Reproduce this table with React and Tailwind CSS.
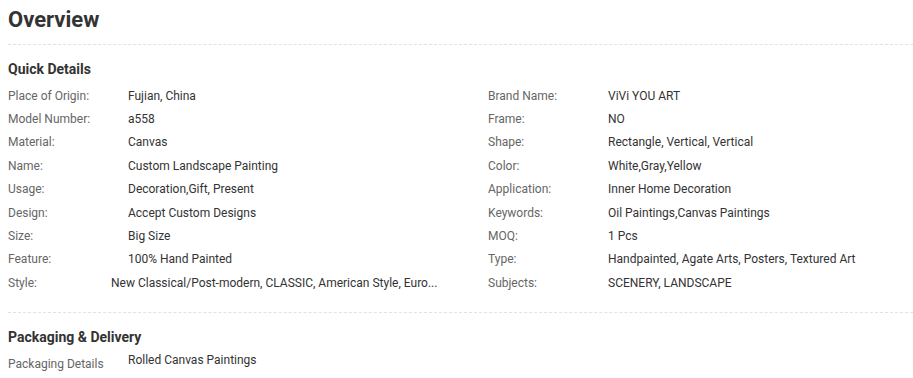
export default function App() {
    const left = [
        ["Place of Origin:", "Fujian, China"],
        ["Model Number:", "a558"],
        ["Material:", "Canvas"],
        ["Name:", "Custom Landscape Painting"],
        ["Usage:", "Decoration,Gift, Present"],
        ["Design:", "Accept Custom Designs"],
        ["Size:", "Big Size"],
        ["Feature:", "100% Hand Painted"],
        ["Style:", "New Classical/Post-modern, CLASSIC, American Style, Euro...", true],
    ];
    const right = [
        ["Brand Name:", "ViVi YOU ART"],
        ["Frame:", "NO"],
        ["Shape:", "Rectangle, Vertical, Vertical"],
        ["Color:", "White,Gray,Yellow"],
        ["Application:", "Inner Home Decoration"],
        ["Keywords:", "Oil Paintings,Canvas Paintings"],
        ["MOQ:", "1 Pcs"],
        ["Type:", "Handpainted, Agate Arts, Posters, Textured Art"],
        ["Subjects:", "SCENERY, LANDSCAPE"],
    ];

    const Row = ({ label, value, wide }) => (
        <div className="flex items-center h-[23.4px] text-[12px]">
            <span className="w-[120px] shrink-0 text-[#666]">{label}</span>
            <span className={`text-[#333] whitespace-nowrap ${wide ? "-ml-[17px]" : ""}`}>{value}</span>
        </div>
    );

    return (
        <div className="min-h-screen bg-white pl-2 overflow-hidden" style={{ fontFamily: "Roboto, 'Liberation Sans', sans-serif" }}>
            {/* Title */}
            <h1 className="text-[22px] font-bold text-[#333] leading-[28px] pt-[6px] pb-[10px] border-b border-dashed border-[#e2e2e2]">
                Overview
            </h1>

            {/* Quick Details */}
            <div className="pt-[15px] pb-[17px] border-b border-dashed border-[#e2e2e2]">
                <h2 className="text-[14px] font-bold text-[#333] leading-[18px] mb-[6px]">Quick Details</h2>
                <div className="grid grid-cols-[480px_1fr]">
                    <div>
                        {left.map(([l, v, w]) => (
                            <Row key={l} label={l} value={v} wide={w} />
                        ))}
                    </div>
                    <div>
                        {right.map(([l, v]) => (
                            <Row key={l} label={l} value={v} />
                        ))}
                    </div>
                </div>
            </div>

            {/* Packaging & Delivery */}
            <div className="pt-[15px]">
                <h2 className="text-[14px] font-bold text-[#333] leading-[18px] mb-[5px]">Packaging &amp; Delivery</h2>
                <div className="flex text-[12px]">
                    <span className="w-[120px] shrink-0 text-[#666] pt-[4px]">Packaging Details</span>
                    <span className="text-[#333]">Rolled Canvas Paintings</span>
                </div>
            </div>
        </div>
    );
}
